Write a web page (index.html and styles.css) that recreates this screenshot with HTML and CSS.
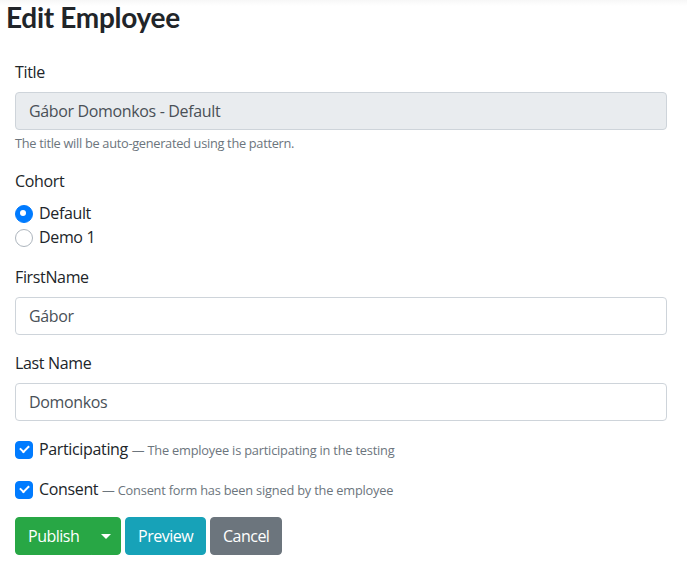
FILE: index.html
```html
<!DOCTYPE html>
<html lang="en">

<head>
    <meta charset="UTF-8">
    <meta name="viewport" content="width=device-width, initial-scale=1.0">
    <title>Edit Employee</title>
    <link rel="stylesheet" href="styles.css">
</head>

<body>
    <div class="page-container">
        <h2 class="page-title">Edit Employee</h2>

        <form class="edit-form">
            <div class="form-group">
                <label for="title">Title</label>
                <input type="text" id="title" class="form-control" value="Gábor Domonkos - Default" disabled>
                <small class="form-text">The title will be auto-generated using the pattern.</small>
            </div>

            <div class="form-group">
                <label>Cohort</label>
                <div class="custom-control">
                    <input type="radio" id="cohortDefault" name="cohort" class="custom-input" checked>
                    <label for="cohortDefault" class="custom-label radio">Default</label>
                </div>
                <div class="custom-control">
                    <input type="radio" id="cohortDemo" name="cohort" class="custom-input">
                    <label for="cohortDemo" class="custom-label radio">Demo 1</label>
                </div>
            </div>

            <div class="form-group">
                <label for="firstName">FirstName</label>
                <input type="text" id="firstName" class="form-control" value="Gábor">
            </div>

            <div class="form-group">
                <label for="lastName">Last Name</label>
                <input type="text" id="lastName" class="form-control" value="Domonkos">
            </div>

            <div class="form-group">
                <div class="custom-control">
                    <input type="checkbox" id="participating" class="custom-input" checked>
                    <label for="participating" class="custom-label check">Participating <span class="hint">— The employee is participating in the testing</span></label>
                </div>
            </div>

            <div class="form-group">
                <div class="custom-control">
                    <input type="checkbox" id="consent" class="custom-input" checked>
                    <label for="consent" class="custom-label check">Consent <span class="hint">— Consent form has been signed by the employee</span></label>
                </div>
            </div>

            <div class="form-actions">
                <div class="btn-group">
                    <button type="button" class="btn btn-success">Publish</button>
                    <button type="button" class="btn btn-success btn-split"><span class="caret"></span></button>
                </div>
                <button type="button" class="btn btn-info">Preview</button>
                <button type="button" class="btn btn-secondary">Cancel</button>
            </div>
        </form>
    </div>
</body>

</html>
```

FILE: styles.css
```css
* {
    box-sizing: border-box;
}

body {
    margin: 0;
    font-family: "Open Sans", "Noto Sans", Arial, sans-serif;
    font-size: 16px;
    line-height: 1.5;
    letter-spacing: -0.35px;
    color: #212529;
    background: linear-gradient(to bottom, #f7f7f7, #ffffff 6px) no-repeat #ffffff;
}

.page-container {
    padding: 0 20px 0 15px;
}

.page-title {
    margin: 0 0 0 -9px;
    font-family: Lato, "Open Sans", sans-serif;
    font-size: 28px;
    font-weight: 700;
    line-height: 34px;
    letter-spacing: -0.3px;
}

.edit-form {
    margin-top: 26px;
}

.form-group {
    margin-bottom: 16px;
}

label {
    display: inline-block;
    margin-bottom: 8px;
}

.form-control {
    display: block;
    width: 100%;
    height: 38px;
    padding: 6px 13px;
    font-family: inherit;
    font-size: 16px;
    line-height: 1.5;
    letter-spacing: inherit;
    color: #495057;
    background-color: #fff;
    border: 1px solid #ced4da;
    border-radius: 4px;
}

.form-control:disabled {
    background-color: #e9ecef;
    opacity: 1;
}

.form-text {
    display: block;
    margin-top: 4px;
    font-size: 12.8px;
    letter-spacing: -0.3px;
    color: #6c757d;
}

.custom-control {
    position: relative;
    min-height: 24px;
    padding-left: 24px;
}

.custom-input {
    position: absolute;
    left: 0;
    opacity: 0;
}

.custom-label {
    position: relative;
    margin-bottom: 0;
}

.custom-label::before {
    content: "";
    position: absolute;
    top: 4px;
    left: -24px;
    width: 16px;
    height: 16px;
    background-color: #fff;
    border: 1px solid #adb5bd;
}

.custom-label.radio::before {
    border-radius: 50%;
}

.custom-label.check::before {
    border-radius: 4px;
}

.custom-input:checked + .custom-label::before {
    background-color: #007bff;
    border-color: #007bff;
}

.custom-input:checked + .custom-label.radio::after {
    content: "";
    position: absolute;
    top: 9px;
    left: -19px;
    width: 6px;
    height: 6px;
    border-radius: 50%;
    background-color: #fff;
}

.custom-input:checked + .custom-label.check::after {
    content: "";
    position: absolute;
    top: 8px;
    left: -19px;
    width: 7px;
    height: 4px;
    border-left: 2.5px solid #fff;
    border-bottom: 2.5px solid #fff;
    transform: rotate(-45deg);
}

.hint {
    font-size: 12.8px;
    letter-spacing: -0.2px;
    color: #6c757d;
}

.btn-group {
    display: inline-flex;
    vertical-align: middle;
}

.btn {
    display: inline-block;
    padding: 6px 12px;
    font-family: inherit;
    font-size: 16px;
    line-height: 1.5;
    letter-spacing: -0.5px;
    color: #fff;
    border: 1px solid transparent;
    border-radius: 4px;
    cursor: pointer;
    vertical-align: middle;
}

.btn-group .btn:first-child {
    border-top-right-radius: 0;
    border-bottom-right-radius: 0;
}

.btn-group .btn-split {
    margin-left: -1px;
    padding: 6px 9px;
    border-top-left-radius: 0;
    border-bottom-left-radius: 0;
}

.caret {
    display: inline-block;
    vertical-align: 3px;
    border-top: 5px solid #fff;
    border-left: 5px solid transparent;
    border-right: 5px solid transparent;
}

.btn-success {
    background-color: #28a745;
    border-color: #28a745;
}

.btn-info {
    background-color: #17a2b8;
    border-color: #17a2b8;
}

.btn-secondary {
    background-color: #6c757d;
    border-color: #6c757d;
}
```
